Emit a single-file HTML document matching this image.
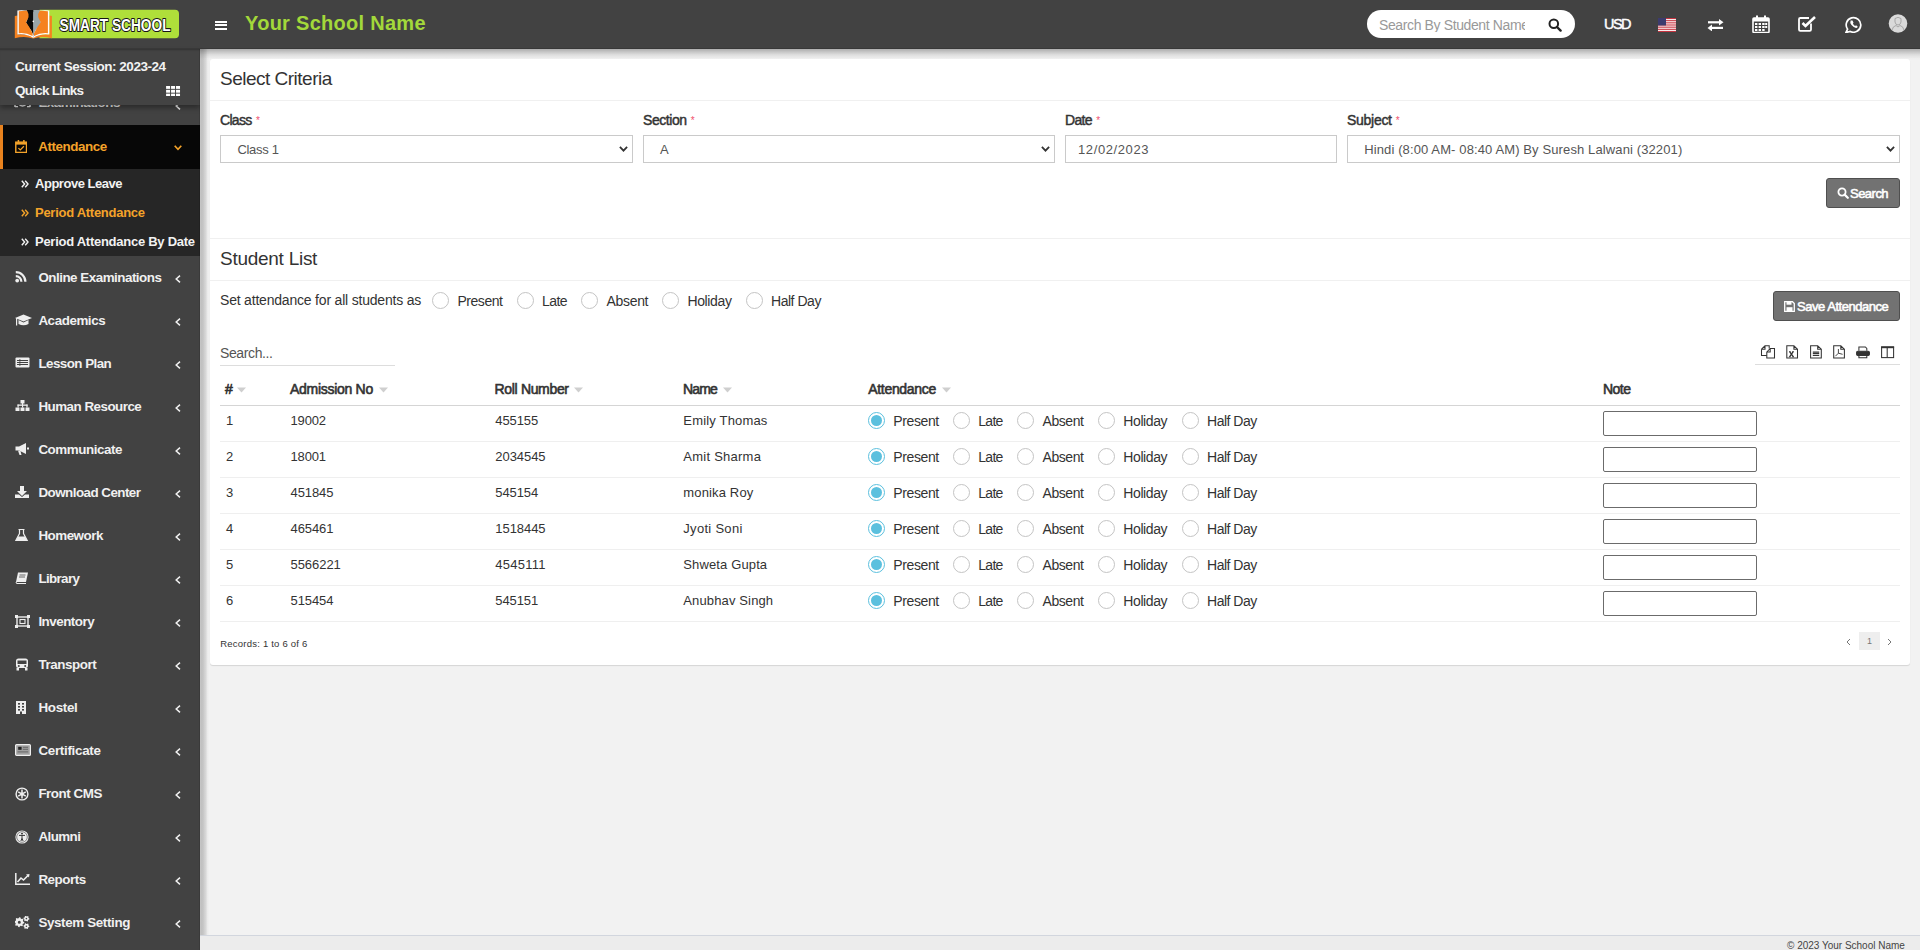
<!DOCTYPE html>
<html><head><meta charset="utf-8"><style>*{box-sizing:border-box;margin:0;padding:0}
html,body{width:1920px;height:950px;overflow:hidden;background:#f1f1f1;font-family:"Liberation Sans",sans-serif;color:#333;font-size:14px}
.abs{position:absolute}
.tx{white-space:nowrap}
#hdr{position:absolute;left:0;top:0;width:1920px;height:49px;background:#424242}
#side{position:absolute;left:0;top:48px;width:200px;height:902px;background:#424242}
.btn{background:#727272;border:1px solid #4f4f4f;border-radius:3px}
.logo-t{left:59px;top:15px;font-size:17px;line-height:17px;font-weight:bold;color:#fff;letter-spacing:-0.3px;transform:scaleX(0.82);transform-origin:0 0;-webkit-text-stroke:0.6px #222;text-shadow:1px 1px 0 #222,-0.5px -0.5px 0 #222}
</style></head><body>
<div id="hdr"></div>
<svg class="abs" style="left:0;top:0" width="190" height="48" viewBox="0 0 190 48">
<path d="M39.5 9.8 H175 Q179 9.8 179 13.8 V34.2 Q179 38.2 175 38.2 H39.5 Z" fill="#afdf3a"/>
<path d="M14.8 16 L17.6 15.6 L17.6 34.6 Q26 33 33.3 37.6 Q41 33 49.3 34.6 L49.3 15.6 L51.9 16 L51.9 38.3 Q42 35.6 33.3 38.6 Q24.5 35.6 14.8 38.3 Z" fill="#f58220"/>
<path d="M17.4 10.4 Q26 9.6 33.3 12 L33.3 38 Q26 33.4 17.4 34.6 Z" fill="#fff"/>
<path d="M49.3 10.4 Q40.6 9.6 33.3 12 L33.3 38 Q40.6 33.4 49.3 34.6 Z" fill="#fff"/>
<path d="M27 10 H33.4 V35 L31 30 Q28 27 26 22.5 Q27.8 20 27.6 16 Z" fill="#0a0a0a"/>
<path d="M33.4 10 H39.7 L40 16 Q39.6 20 41 22.5 Q38.5 27 35.6 30 L33.4 35 Z" fill="#9aa6aa"/>
<path d="M18.8 11.2 Q23 10.6 27 10.8 Q29.2 14 28.5 17.2 Q27.6 19 26 22.2 Q29.5 26.5 32.6 33.5 L32.6 36 Q26 32.4 18.8 33.2 Z" fill="#f58220"/>
<path d="M47.9 11.2 Q43.7 10.6 39.7 10.8 Q37.5 14 38.2 17.2 Q39.1 19 40.7 22.2 Q37.2 26.5 34 33.5 L34 36 Q40.7 32.4 47.9 33.2 Z" fill="#f58220"/>
<circle cx="33.3" cy="21.4" r="0.8" fill="#fff"/>
<text x="59.5" y="30.8" font-family="Liberation Sans" font-weight="bold" font-size="17.3" textLength="111" lengthAdjust="spacingAndGlyphs" fill="#fff" stroke="#151515" stroke-width="2.1" paint-order="stroke" stroke-linejoin="round">SMART SCHOOL</text>
</svg>
<div class="abs" style="left:214.5px;top:20.5px;width:12.3px;height:2.3px;background:#fff"></div>
<div class="abs" style="left:214.5px;top:24.2px;width:12.3px;height:2.3px;background:#fff"></div>
<div class="abs" style="left:214.5px;top:27.9px;width:12.3px;height:2.3px;background:#fff"></div>
<div class="abs" style="left:1367px;top:10px;width:208px;height:28px;border-radius:14px;background:#fff"></div>
<svg class="abs" style="left:1548px;top:17.5px" width="14" height="14" viewBox="0 0 14 14"><circle cx="5.8" cy="5.8" r="4.3" stroke="#222" stroke-width="2" fill="none"/><path d="M9 9 L12.6 12.6" stroke="#222" stroke-width="2.4" stroke-linecap="round"/></svg>
<svg class="abs" style="left:1658px;top:18px" width="18" height="14" viewBox="0 0 18 14">
<rect width="18" height="14" fill="#fff"/>
<g fill="#c5333f"><rect y="0" width="18" height="1.1"/><rect y="2.15" width="18" height="1.1"/><rect y="4.3" width="18" height="1.1"/><rect y="6.45" width="18" height="1.1"/><rect y="8.6" width="18" height="1.1"/><rect y="10.75" width="18" height="1.1"/><rect y="12.9" width="18" height="1.1"/></g>
<rect width="8" height="7.5" fill="#3c3b6e"/></svg>
<svg class="abs" style="left:1707px;top:19px" width="17" height="12" viewBox="0 0 17 12" fill="#fff">
<rect x="1" y="2.2" width="12" height="2.2"/><path d="M12 0 L16.5 3.3 L12 6.6Z"/>
<rect x="4" y="7.8" width="12" height="2.2"/><path d="M5 5.4 L0.5 8.9 L5 12.4Z"/></svg>
<svg class="abs" style="left:1752px;top:15px" width="18" height="18" viewBox="0 0 18 18">
<rect x="1" y="3" width="16" height="14.5" rx="1" fill="none" stroke="#fff" stroke-width="1.6"/>
<rect x="1" y="3" width="16" height="3.5" fill="#fff"/>
<rect x="4" y="0.5" width="2" height="4" fill="#fff"/><rect x="12" y="0.5" width="2" height="4" fill="#fff"/>
<g fill="#fff"><rect x="3" y="8" width="2.4" height="2"/><rect x="6.6" y="8" width="2.4" height="2"/><rect x="10.2" y="8" width="2.4" height="2"/><rect x="13.2" y="8" width="2" height="2"/>
<rect x="3" y="11" width="2.4" height="2"/><rect x="6.6" y="11" width="2.4" height="2"/><rect x="10.2" y="11" width="2.4" height="2"/><rect x="13.2" y="11" width="2" height="2"/>
<rect x="3" y="14" width="2.4" height="2"/><rect x="6.6" y="14" width="2.4" height="2"/><rect x="10.2" y="14" width="2.4" height="2"/></g></svg>
<svg class="abs" style="left:1798px;top:16px" width="19" height="16" viewBox="0 0 19 16">
<path d="M13 7.5 V13.5 Q13 14.8 11.7 14.8 H2.3 Q1 14.8 1 13.5 V3.3 Q1 2 2.3 2 H11" fill="none" stroke="#fff" stroke-width="1.8"/>
<path d="M4.5 7 L7.5 10 L17 1" fill="none" stroke="#fff" stroke-width="2.6"/></svg>
<svg class="abs" style="left:1845px;top:16px" width="18" height="17" viewBox="0 0 18 17">
<path d="M2.6 13.2 A7.3 7.3 0 1 1 5.2 15.4 L1 16.5 Z" fill="none" stroke="#fff" stroke-width="1.7"/>
<path d="M5.6 4.6 Q4.6 6.6 6.5 9.1 Q8.7 11.7 11 12 Q12.5 12 12.7 10.5 L11 9.2 L10.1 9.9 Q8.6 9.2 7.9 7.6 L8.5 6.7 L7.5 4.6 Z" fill="#fff"/></svg>
<svg class="abs" style="left:1888px;top:14px" width="20" height="19" viewBox="0 0 20 19">
<circle cx="10" cy="9.5" r="9.3" fill="#dadada"/>
<path d="M7 4.5 Q10 2.2 13 4.5 L13 8 Q12.5 11 10 11 Q7.5 11 7 8 Z" fill="none" stroke="#9a9a9a" stroke-width="0.8"/>
<path d="M4 16 Q5 12 8 11.5 L10 13 L12 11.5 Q15 12 16 16" fill="none" stroke="#9a9a9a" stroke-width="0.8"/></svg>
<div id="side"></div>
<div class="abs tx" style="left:38.40px;top:96.26px;font-size:13.4px;line-height:13.4px;font-weight:bold;color:#eee;letter-spacing:-0.460px">Examinations</div>
<svg class="abs" style="left:175px;top:101.5px" width="6" height="8" viewBox="0 0 6 8"><path d="M5 0.6 L1.2 4 L5 7.4" stroke="#f0f0f0" stroke-width="1.5" fill="none"/></svg>
<svg class="abs" style="left:14px;top:98px" width="17" height="10" viewBox="0 0 17 10"><path d="M1 9 L1 3 M16 9 L16 3 M4 5 Q8.5 11 13 5" stroke="#eee" stroke-width="1.5" fill="none"/><path d="M1 8.6 H4 M13 8.6 H16" stroke="#eee" stroke-width="1.2"/></svg>
<div class="abs" style="left:0;top:49px;width:200px;height:56px;background:#434343;box-shadow:0 3px 5px rgba(0,0,0,0.35), inset 0 2px 2px -1px rgba(0,0,0,0.25)"></div>
<svg class="abs" style="left:166px;top:85.5px" width="14.5" height="10.5" viewBox="0 0 15 11" fill="#fff">
<rect x="0" y="0" width="4.2" height="3"/><rect x="5.2" y="0" width="4.2" height="3"/><rect x="10.4" y="0" width="4.2" height="3"/>
<rect x="0" y="4" width="4.2" height="3"/><rect x="5.2" y="4" width="4.2" height="3"/><rect x="10.4" y="4" width="4.2" height="3"/>
<rect x="0" y="8" width="4.2" height="3"/><rect x="5.2" y="8" width="4.2" height="3"/><rect x="10.4" y="8" width="4.2" height="3"/></svg>
<div class="abs" style="left:0;top:125px;width:200px;height:44px;background:#070707"></div>
<div class="abs" style="left:0;top:125px;width:3px;height:44px;background:#e8821e"></div>
<div class="abs" style="left:0;top:169px;width:200px;height:87px;background:#262626"></div>
<svg class="abs" style="left:15px;top:139.8px" width="12.3" height="13.2" viewBox="0 0 13 14">
<rect x="0.8" y="2.3" width="11.4" height="10.9" fill="none" stroke="#f4a32a" stroke-width="1.5"/><rect x="0.8" y="2.3" width="11.4" height="2.6" fill="#f4a32a"/>
<rect x="2.8" y="0" width="1.6" height="3" fill="#f4a32a"/><rect x="8.6" y="0" width="1.6" height="3" fill="#f4a32a"/>
<path d="M3.6 8.6 L5.6 10.5 L9.4 6.6" stroke="#f4a32a" stroke-width="1.3" fill="none"/></svg>
<svg class="abs" style="left:174px;top:145px" width="8" height="6" viewBox="0 0 8 6"><path d="M0.7 0.7 L4 4.4 L7.3 0.7" stroke="#f4a32a" stroke-width="1.6" fill="none"/></svg>
<svg class="abs" style="left:21px;top:180.20000000000002px" width="8" height="8" viewBox="0 0 8 8"><path d="M0.8 0.8 L3.6 4 L0.8 7.2 M4.2 0.8 L7 4 L4.2 7.2" stroke="#f2f2f2" stroke-width="1.4" fill="none"/></svg>
<svg class="abs" style="left:21px;top:208.8px" width="8" height="8" viewBox="0 0 8 8"><path d="M0.8 0.8 L3.6 4 L0.8 7.2 M4.2 0.8 L7 4 L4.2 7.2" stroke="#f4a32a" stroke-width="1.4" fill="none"/></svg>
<svg class="abs" style="left:21px;top:237.9px" width="8" height="8" viewBox="0 0 8 8"><path d="M0.8 0.8 L3.6 4 L0.8 7.2 M4.2 0.8 L7 4 L4.2 7.2" stroke="#f2f2f2" stroke-width="1.4" fill="none"/></svg>
<svg class="abs" style="left:15px;top:271px" width="18" height="14" viewBox="0 0 18 14"><circle cx="2.2" cy="9.6" r="1.9" fill="#eee"/><path d="M0.8 5.2 A5.6 5.6 0 0 1 6.4 10.8 M0.8 1.2 A9.6 9.6 0 0 1 10.4 10.8" stroke="#eee" stroke-width="2.2" fill="none"/></svg>
<svg class="abs" style="left:175px;top:275px" width="6" height="8" viewBox="0 0 6 8"><path d="M5 0.6 L1.2 4 L5 7.4" stroke="#f0f0f0" stroke-width="1.5" fill="none"/></svg>
<svg class="abs" style="left:15px;top:314px" width="18" height="14" viewBox="0 0 18 14"><path d="M0 4 L8.5 0.5 L17 4 L8.5 7.5 Z" fill="#eee"/><path d="M3.5 6 L3.5 10 Q8.5 12.5 13.5 10 L13.5 6 L8.5 8.5 Z" fill="#eee"/><rect x="1" y="4" width="1.2" height="7.5" fill="#eee"/></svg>
<svg class="abs" style="left:175px;top:318px" width="6" height="8" viewBox="0 0 6 8"><path d="M5 0.6 L1.2 4 L5 7.4" stroke="#f0f0f0" stroke-width="1.5" fill="none"/></svg>
<svg class="abs" style="left:15px;top:357px" width="18" height="14" viewBox="0 0 18 14"><rect x="0.5" y="0.5" width="14" height="10" rx="1" fill="#eee"/><g fill="#424242"><rect x="2" y="3" width="11" height="1"/><rect x="2" y="5" width="11" height="1"/><rect x="2" y="7" width="11" height="1"/><rect x="4.5" y="2" width="0.8" height="7"/></g></svg>
<svg class="abs" style="left:175px;top:361px" width="6" height="8" viewBox="0 0 6 8"><path d="M5 0.6 L1.2 4 L5 7.4" stroke="#f0f0f0" stroke-width="1.5" fill="none"/></svg>
<svg class="abs" style="left:15px;top:400px" width="18" height="14" viewBox="0 0 18 14"><rect x="5.5" y="0" width="4" height="3.5" fill="#eee"/><rect x="2.5" y="4.5" width="10" height="1.3" fill="#eee"/><rect x="7" y="3" width="1.1" height="2" fill="#eee"/><rect x="2.5" y="4.5" width="1.2" height="3" fill="#eee"/><rect x="11.4" y="4.5" width="1.2" height="3" fill="#eee"/><rect x="0.5" y="7.5" width="4" height="3.5" fill="#eee"/><rect x="5.5" y="7.5" width="4" height="3.5" fill="#eee"/><rect x="10.5" y="7.5" width="4" height="3.5" fill="#eee"/><rect x="7" y="5" width="1.1" height="2.5" fill="#eee"/></svg>
<svg class="abs" style="left:175px;top:404px" width="6" height="8" viewBox="0 0 6 8"><path d="M5 0.6 L1.2 4 L5 7.4" stroke="#f0f0f0" stroke-width="1.5" fill="none"/></svg>
<svg class="abs" style="left:15px;top:443px" width="18" height="14" viewBox="0 0 18 14"><path d="M0.5 3.5 L4 3.5 L11 0 L11 11 L4 7.5 L0.5 7.5 Z" fill="#eee"/><path d="M3 7.5 L4.5 12 L6.5 12 L5.5 8" fill="#eee"/><rect x="12" y="4.5" width="2" height="2" fill="#eee"/></svg>
<svg class="abs" style="left:175px;top:447px" width="6" height="8" viewBox="0 0 6 8"><path d="M5 0.6 L1.2 4 L5 7.4" stroke="#f0f0f0" stroke-width="1.5" fill="none"/></svg>
<svg class="abs" style="left:15px;top:486px" width="18" height="14" viewBox="0 0 18 14"><path d="M5 0 L9 0 L9 5 L12 5 L7 10 L2 5 L5 5 Z" fill="#eee"/><path d="M0 8.5 L4 8.5 L7 11 L10 8.5 L14 8.5 L14 12 L0 12 Z" fill="#eee"/></svg>
<svg class="abs" style="left:175px;top:490px" width="6" height="8" viewBox="0 0 6 8"><path d="M5 0.6 L1.2 4 L5 7.4" stroke="#f0f0f0" stroke-width="1.5" fill="none"/></svg>
<svg class="abs" style="left:15px;top:529px" width="18" height="14" viewBox="0 0 18 14"><path d="M3.5 0.5 L9.5 0.5 M4.5 0.5 L4.5 4.5 L0.8 11.5 L12.2 11.5 L8.5 4.5 L8.5 0.5" stroke="#eee" stroke-width="1.2" fill="none"/><path d="M3 7.5 L10 7.5 L12 11.5 L1 11.5 Z" fill="#eee"/></svg>
<svg class="abs" style="left:175px;top:533px" width="6" height="8" viewBox="0 0 6 8"><path d="M5 0.6 L1.2 4 L5 7.4" stroke="#f0f0f0" stroke-width="1.5" fill="none"/></svg>
<svg class="abs" style="left:15px;top:572px" width="18" height="14" viewBox="0 0 18 14"><path d="M3 0.5 L13 0.5 L11 10 L1 10 Z" fill="#eee"/><path d="M1 10 L1.6 11.5 L11 11.5" stroke="#eee" stroke-width="1" fill="none"/><path d="M4.5 3 L10.5 3 M4 5 L10 5" stroke="#424242" stroke-width="0.8"/></svg>
<svg class="abs" style="left:175px;top:576px" width="6" height="8" viewBox="0 0 6 8"><path d="M5 0.6 L1.2 4 L5 7.4" stroke="#f0f0f0" stroke-width="1.5" fill="none"/></svg>
<svg class="abs" style="left:15px;top:615px" width="18" height="14" viewBox="0 0 18 14"><rect x="2" y="2" width="11" height="9" fill="none" stroke="#eee" stroke-width="1.4"/><rect x="0" y="0" width="3" height="3" fill="#eee"/><rect x="12" y="0" width="3" height="3" fill="#eee"/><rect x="0" y="10" width="3" height="3" fill="#eee"/><rect x="12" y="10" width="3" height="3" fill="#eee"/><rect x="5" y="4.5" width="5" height="4" fill="none" stroke="#eee" stroke-width="1.1"/></svg>
<svg class="abs" style="left:175px;top:619px" width="6" height="8" viewBox="0 0 6 8"><path d="M5 0.6 L1.2 4 L5 7.4" stroke="#f0f0f0" stroke-width="1.5" fill="none"/></svg>
<svg class="abs" style="left:15px;top:658px" width="18" height="14" viewBox="0 0 18 14"><rect x="1" y="0.5" width="12" height="9.5" rx="2.5" fill="#eee"/><rect x="2.5" y="2.5" width="9" height="3.5" fill="#424242"/><circle cx="3.8" cy="8" r="1" fill="#424242"/><circle cx="10.2" cy="8" r="1" fill="#424242"/><rect x="1.5" y="10" width="2.5" height="2.5" fill="#eee"/><rect x="10" y="10" width="2.5" height="2.5" fill="#eee"/></svg>
<svg class="abs" style="left:175px;top:662px" width="6" height="8" viewBox="0 0 6 8"><path d="M5 0.6 L1.2 4 L5 7.4" stroke="#f0f0f0" stroke-width="1.5" fill="none"/></svg>
<svg class="abs" style="left:15px;top:701px" width="18" height="14" viewBox="0 0 18 14"><rect x="1" y="0" width="10" height="13" fill="#eee"/><g fill="#424242"><rect x="3" y="2" width="2" height="1.6"/><rect x="7" y="2" width="2" height="1.6"/><rect x="3" y="5" width="2" height="1.6"/><rect x="7" y="5" width="2" height="1.6"/><rect x="3" y="8" width="2" height="1.6"/><rect x="7" y="8" width="2" height="1.6"/><rect x="5" y="10.5" width="2" height="2.5"/></g></svg>
<svg class="abs" style="left:175px;top:705px" width="6" height="8" viewBox="0 0 6 8"><path d="M5 0.6 L1.2 4 L5 7.4" stroke="#f0f0f0" stroke-width="1.5" fill="none"/></svg>
<svg class="abs" style="left:15px;top:744px" width="18" height="14" viewBox="0 0 18 14"><rect x="0.6" y="0.6" width="14.8" height="10.8" rx="1" fill="#a0a0a0" stroke="#eee" stroke-width="1.2"/><rect x="3.2" y="2.8" width="3.4" height="3" fill="#222"/><g fill="#666"><rect x="7.8" y="2.8" width="5.2" height="1"/><rect x="7.8" y="4.8" width="5.2" height="1"/><rect x="2.6" y="7.4" width="10.6" height="1"/></g></svg>
<svg class="abs" style="left:175px;top:748px" width="6" height="8" viewBox="0 0 6 8"><path d="M5 0.6 L1.2 4 L5 7.4" stroke="#f0f0f0" stroke-width="1.5" fill="none"/></svg>
<svg class="abs" style="left:15px;top:787px" width="18" height="14" viewBox="0 0 18 14"><circle cx="7" cy="7" r="6.6" fill="#eee"/><circle cx="7" cy="7" r="5.2" fill="#424242"/><path d="M7 2.6 L7 11.4 M3.2 4.8 L10.8 9.2 M3.2 9.2 L10.8 4.8" stroke="#eee" stroke-width="1.5"/><circle cx="7" cy="7" r="1.6" fill="#eee"/></svg>
<svg class="abs" style="left:175px;top:791px" width="6" height="8" viewBox="0 0 6 8"><path d="M5 0.6 L1.2 4 L5 7.4" stroke="#f0f0f0" stroke-width="1.5" fill="none"/></svg>
<svg class="abs" style="left:15px;top:830px" width="18" height="14" viewBox="0 0 18 14"><circle cx="7" cy="7" r="6.6" fill="#eee"/><circle cx="7" cy="7" r="5.3" fill="none" stroke="#424242" stroke-width="0.6"/><circle cx="7" cy="3.6" r="0.9" fill="#222"/><path d="M4 5.4 L10 5.4 M7 5.4 L7 8.4 M7 8.3 L5.9 11 M7 8.3 L8.1 11" stroke="#222" stroke-width="0.9" fill="none"/></svg>
<svg class="abs" style="left:175px;top:834px" width="6" height="8" viewBox="0 0 6 8"><path d="M5 0.6 L1.2 4 L5 7.4" stroke="#f0f0f0" stroke-width="1.5" fill="none"/></svg>
<svg class="abs" style="left:15px;top:873px" width="18" height="14" viewBox="0 0 18 14"><path d="M0.8 0 L0.8 11.2 L15 11.2" stroke="#eee" stroke-width="1.5" fill="none"/><path d="M2.5 9 L6 5 L8.5 7 L13.5 2" stroke="#eee" stroke-width="1.6" fill="none"/><path d="M11 1.5 L14.5 1 L14 4.5Z" fill="#eee"/></svg>
<svg class="abs" style="left:175px;top:877px" width="6" height="8" viewBox="0 0 6 8"><path d="M5 0.6 L1.2 4 L5 7.4" stroke="#f0f0f0" stroke-width="1.5" fill="none"/></svg>
<svg class="abs" style="left:15px;top:916px" width="18" height="14" viewBox="0 0 18 14"><path fill-rule="evenodd" d="M8.13 5.44 L9.30 6.20 L9.20 7.18 L7.90 7.69 L7.54 8.37 L7.84 9.74 L7.08 10.36 L5.79 9.80 L5.06 10.03 L4.30 11.20 L3.32 11.10 L2.81 9.80 L2.13 9.44 L0.76 9.74 L0.14 8.98 L0.70 7.69 L0.47 6.96 L-0.70 6.20 L-0.60 5.22 L0.70 4.71 L1.06 4.03 L0.76 2.66 L1.52 2.04 L2.81 2.60 L3.54 2.37 L4.30 1.20 L5.28 1.30 L5.79 2.60 L6.47 2.96 L7.84 2.66 L8.46 3.42 L7.90 4.71 Z M5.80 6.20 A1.5 1.5 0 1 0 2.80 6.20 A1.5 1.5 0 1 0 5.80 6.20 Z M13.62 2.00 L14.40 2.60 L14.30 3.38 L13.39 3.75 L13.03 4.23 L12.90 5.20 L12.18 5.50 L11.40 4.90 L10.80 4.82 L9.90 5.20 L9.28 4.72 L9.41 3.75 L9.18 3.20 L8.40 2.60 L8.50 1.82 L9.41 1.45 L9.77 0.97 L9.90 0.00 L10.62 -0.30 L11.40 0.30 L12.00 0.38 L12.90 0.00 L13.52 0.48 L13.39 1.45 Z M12.20 2.60 A0.8 0.8 0 1 0 10.60 2.60 A0.8 0.8 0 1 0 12.20 2.60 Z M13.62 9.60 L14.40 10.20 L14.30 10.98 L13.39 11.35 L13.03 11.83 L12.90 12.80 L12.18 13.10 L11.40 12.50 L10.80 12.42 L9.90 12.80 L9.28 12.32 L9.41 11.35 L9.18 10.80 L8.40 10.20 L8.50 9.42 L9.41 9.05 L9.77 8.57 L9.90 7.60 L10.62 7.30 L11.40 7.90 L12.00 7.98 L12.90 7.60 L13.52 8.08 L13.39 9.05 Z M12.20 10.20 A0.8 0.8 0 1 0 10.60 10.20 A0.8 0.8 0 1 0 12.20 10.20 Z" fill="#eee"/></svg>
<svg class="abs" style="left:175px;top:920px" width="6" height="8" viewBox="0 0 6 8"><path d="M5 0.6 L1.2 4 L5 7.4" stroke="#f0f0f0" stroke-width="1.5" fill="none"/></svg>
<div class="abs" style="left:200px;top:49px;width:1720px;height:887px;background:#f2f2f2"></div>
<div class="abs" style="left:200px;top:49px;width:10px;height:887px;background:linear-gradient(to right, rgba(0,0,0,0.190) 0.5px, rgba(0,0,0,0.202) 1.5px, rgba(0,0,0,0.194) 2.5px, rgba(0,0,0,0.174) 3.5px, rgba(0,0,0,0.140) 4.5px, rgba(0,0,0,0.112) 5.5px, rgba(0,0,0,0.074) 6.5px, rgba(0,0,0,0.029) 7.5px, rgba(0,0,0,0.012) 8.5px, rgba(0,0,0,0.000) 9.5px)"></div>
<div class="abs" style="left:200px;top:49px;width:1720px;height:12px;background:linear-gradient(to bottom, rgba(0,0,0,0.260) 0.5px, rgba(0,0,0,0.231) 1.5px, rgba(0,0,0,0.198) 2.5px, rgba(0,0,0,0.161) 3.5px, rgba(0,0,0,0.128) 4.5px, rgba(0,0,0,0.095) 5.5px, rgba(0,0,0,0.070) 6.5px, rgba(0,0,0,0.050) 7.5px, rgba(0,0,0,0.037) 8.5px, rgba(0,0,0,0.017) 9.5px, rgba(0,0,0,0.008) 10.5px, rgba(0,0,0,0.000) 11.5px)"></div>
<div class="abs" style="left:0;top:48px;width:1920px;height:1px;background:#383838"></div>
<div class="abs" style="left:199px;top:49px;width:1px;height:901px;background:rgba(0,0,0,0.12)"></div>
<div class="abs" style="left:200px;top:935px;width:1720px;height:15px;background:#ececec;border-top:1px solid #d2d6de"></div>
<div class="abs" style="left:210px;top:59px;width:1700px;height:606px;background:#fff;border-radius:3px;box-shadow:0 1px 1px rgba(0,0,0,0.12)"></div>
<div class="abs" style="left:210px;top:100px;width:1700px;height:1px;background:#f0f0f0"></div>
<div class="abs" style="left:210px;top:238px;width:1700px;height:1px;background:#f0f0f0"></div>
<div class="abs" style="left:210px;top:280px;width:1700px;height:1px;background:#f0f0f0"></div>
<div class="abs" style="left:256.1px;top:115.5px;font-size:10px;color:#f0506e;line-height:10px">*</div>
<div class="abs" style="left:220px;top:135px;width:412.6px;height:28px;border:1px solid #cacaca;background:#fff"></div>
<div class="abs" style="left:690.8px;top:115.5px;font-size:10px;color:#f0506e;line-height:10px">*</div>
<div class="abs" style="left:643px;top:135px;width:411.5px;height:28px;border:1px solid #cacaca;background:#fff"></div>
<div class="abs" style="left:1096.3px;top:115.5px;font-size:10px;color:#f0506e;line-height:10px">*</div>
<div class="abs" style="left:1065px;top:135px;width:271.5px;height:28px;border:1px solid #cacaca;background:#fff"></div>
<div class="abs" style="left:1395.8px;top:115.5px;font-size:10px;color:#f0506e;line-height:10px">*</div>
<div class="abs" style="left:1347px;top:135px;width:552.5px;height:28px;border:1px solid #cacaca;background:#fff"></div>
<svg class="abs" style="left:618.5px;top:146px" width="9" height="6" viewBox="0 0 9 6"><path d="M0.9 0.9 L4.5 4.6 L8.1 0.9" stroke="#333" stroke-width="1.8" fill="none"/></svg>
<svg class="abs" style="left:1040.5px;top:146px" width="9" height="6" viewBox="0 0 9 6"><path d="M0.9 0.9 L4.5 4.6 L8.1 0.9" stroke="#333" stroke-width="1.8" fill="none"/></svg>
<svg class="abs" style="left:1885.5px;top:146px" width="9" height="6" viewBox="0 0 9 6"><path d="M0.9 0.9 L4.5 4.6 L8.1 0.9" stroke="#333" stroke-width="1.8" fill="none"/></svg>
<div class="abs btn" style="left:1826px;top:178px;width:74px;height:30px"></div>
<svg class="abs" style="left:1837px;top:187px" width="12" height="12" viewBox="0 0 12 12"><circle cx="5" cy="5" r="3.6" stroke="#fff" stroke-width="1.8" fill="none"/><path d="M7.6 7.6 L10.8 10.8" stroke="#fff" stroke-width="2.2" stroke-linecap="round"/></svg>
<div class="abs" style="left:432px;top:291.5px;width:17px;height:17px;border-radius:50%;border:1px solid #c4c4c4;background:#fff"></div>
<div class="abs" style="left:517px;top:291.5px;width:17px;height:17px;border-radius:50%;border:1px solid #c4c4c4;background:#fff"></div>
<div class="abs" style="left:581px;top:291.5px;width:17px;height:17px;border-radius:50%;border:1px solid #c4c4c4;background:#fff"></div>
<div class="abs" style="left:662px;top:291.5px;width:17px;height:17px;border-radius:50%;border:1px solid #c4c4c4;background:#fff"></div>
<div class="abs" style="left:745.7px;top:291.5px;width:17px;height:17px;border-radius:50%;border:1px solid #c4c4c4;background:#fff"></div>
<div class="abs btn" style="left:1773px;top:291px;width:127px;height:30px"></div>
<svg class="abs" style="left:1784px;top:301px" width="11" height="11" viewBox="0 0 11 11"><path d="M0.7 0.7 H8.5 L10.3 2.5 V10.3 H0.7 Z" fill="none" stroke="#fff" stroke-width="1.3"/><rect x="2.5" y="0.7" width="5" height="3" fill="#fff"/><rect x="2.5" y="6.2" width="6" height="4" fill="#fff"/></svg>
<div class="abs" style="left:220px;top:365px;width:175px;height:1px;background:#ddd"></div>
<div class="abs" style="left:1755px;top:364px;width:145px;height:1px;background:#ddd"></div>
<svg class="abs" style="left:1755px;top:340px" width="145" height="22" viewBox="0 0 145 22" fill="none" stroke="#333" stroke-width="1.05">
<path d="M6.5 9.2 L10 5.8 L14.2 5.8 L14.2 8.4 M6.5 9.2 L6.5 15.4 L11.8 15.4 M6.5 9.2 L10 9.2 L10 5.8"/>
<path d="M11.8 12 L15.2 8.4 L19.5 8.4 L19.5 18 L11.8 18 Z M11.8 12 L15.2 12 L15.2 8.4"/>
<path d="M31.8 5.8 L38.9 5.8 L42.5 9.2 L42.5 18 L31.8 18 Z M38.9 5.8 L38.9 9.2 L42.5 9.2"/>
<path d="M34.6 11.6 L38.4 16.8 M38.2 11.6 L34.6 16.8" stroke-width="1.3"/><path d="M34 11.6 H35.6 M37.3 11.6 H38.9 M33.9 16.8 H35.5 M37.4 16.8 H39" stroke-width="0.8"/>
<path d="M55.6 5.8 L62.7 5.8 L66.3 9.2 L66.3 18 L55.6 18 Z M62.7 5.8 L62.7 9.2 L66.3 9.2"/>
<path d="M57.8 12.1 H64.2 M57.8 13.6 H64.2 M57.8 15.4 H64.2"/>
<path d="M78.7 5.8 L85.8 5.8 L89.4 9.2 L89.4 18 L78.7 18 Z M85.8 5.8 L85.8 9.2 L89.4 9.2"/>
<path d="M83.4 9 L83.4 13.2 L80.4 16.2 M83.4 13.2 L87.6 14.3" stroke-width="0.9"/>
<path d="M103.9 10.8 L103.9 6.9 L110.3 6.9 L111.8 8.4 L111.8 10.8 M103.9 15.5 L103.9 17.7 L111.8 17.7 L111.8 15.5"/>
<rect x="101.6" y="11.2" width="12.8" height="4.3" rx="1.2" fill="#333"/>
<rect x="126.6" y="7" width="12" height="10.6"/><path d="M126.1 7.3 H139.1" stroke-width="1.8"/><path d="M132.2 7 V17.6"/>
</svg>
<svg class="abs" style="left:237px;top:387px" width="9" height="6" viewBox="0 0 9 6"><path d="M0 0.5 L9 0.5 L4.5 5.5Z" fill="#cfcfcf"/></svg>
<svg class="abs" style="left:379px;top:387px" width="9" height="6" viewBox="0 0 9 6"><path d="M0 0.5 L9 0.5 L4.5 5.5Z" fill="#cfcfcf"/></svg>
<svg class="abs" style="left:574px;top:387px" width="9" height="6" viewBox="0 0 9 6"><path d="M0 0.5 L9 0.5 L4.5 5.5Z" fill="#cfcfcf"/></svg>
<svg class="abs" style="left:723px;top:387px" width="9" height="6" viewBox="0 0 9 6"><path d="M0 0.5 L9 0.5 L4.5 5.5Z" fill="#cfcfcf"/></svg>
<svg class="abs" style="left:941.5px;top:387px" width="9" height="6" viewBox="0 0 9 6"><path d="M0 0.5 L9 0.5 L4.5 5.5Z" fill="#cfcfcf"/></svg>
<div class="abs" style="left:220px;top:404.5px;width:1680px;height:1.5px;background:#d5d5d5"></div>
<div class="abs" style="left:868px;top:412.0px;width:17px;height:17px;border-radius:50%;border:1.2px solid #5bc0de;background:#fff"><div style="position:absolute;left:1.8px;top:1.8px;width:11px;height:11px;border-radius:50%;background:#5bc0de"></div></div>
<div class="abs" style="left:953px;top:412.0px;width:17px;height:17px;border-radius:50%;border:1px solid #c4c4c4;background:#fff"></div>
<div class="abs" style="left:1017px;top:412.0px;width:17px;height:17px;border-radius:50%;border:1px solid #c4c4c4;background:#fff"></div>
<div class="abs" style="left:1098px;top:412.0px;width:17px;height:17px;border-radius:50%;border:1px solid #c4c4c4;background:#fff"></div>
<div class="abs" style="left:1182px;top:412.0px;width:17px;height:17px;border-radius:50%;border:1px solid #c4c4c4;background:#fff"></div>
<div class="abs" style="left:1603px;top:411px;width:154px;height:25px;border:1px solid #6b6b6b;border-radius:2px;background:#fff"></div>
<div class="abs" style="left:220px;top:441px;width:1680px;height:1px;background:#efefef"></div>
<div class="abs" style="left:868px;top:448.0px;width:17px;height:17px;border-radius:50%;border:1.2px solid #5bc0de;background:#fff"><div style="position:absolute;left:1.8px;top:1.8px;width:11px;height:11px;border-radius:50%;background:#5bc0de"></div></div>
<div class="abs" style="left:953px;top:448.0px;width:17px;height:17px;border-radius:50%;border:1px solid #c4c4c4;background:#fff"></div>
<div class="abs" style="left:1017px;top:448.0px;width:17px;height:17px;border-radius:50%;border:1px solid #c4c4c4;background:#fff"></div>
<div class="abs" style="left:1098px;top:448.0px;width:17px;height:17px;border-radius:50%;border:1px solid #c4c4c4;background:#fff"></div>
<div class="abs" style="left:1182px;top:448.0px;width:17px;height:17px;border-radius:50%;border:1px solid #c4c4c4;background:#fff"></div>
<div class="abs" style="left:1603px;top:447px;width:154px;height:25px;border:1px solid #6b6b6b;border-radius:2px;background:#fff"></div>
<div class="abs" style="left:220px;top:477px;width:1680px;height:1px;background:#efefef"></div>
<div class="abs" style="left:868px;top:484.0px;width:17px;height:17px;border-radius:50%;border:1.2px solid #5bc0de;background:#fff"><div style="position:absolute;left:1.8px;top:1.8px;width:11px;height:11px;border-radius:50%;background:#5bc0de"></div></div>
<div class="abs" style="left:953px;top:484.0px;width:17px;height:17px;border-radius:50%;border:1px solid #c4c4c4;background:#fff"></div>
<div class="abs" style="left:1017px;top:484.0px;width:17px;height:17px;border-radius:50%;border:1px solid #c4c4c4;background:#fff"></div>
<div class="abs" style="left:1098px;top:484.0px;width:17px;height:17px;border-radius:50%;border:1px solid #c4c4c4;background:#fff"></div>
<div class="abs" style="left:1182px;top:484.0px;width:17px;height:17px;border-radius:50%;border:1px solid #c4c4c4;background:#fff"></div>
<div class="abs" style="left:1603px;top:483px;width:154px;height:25px;border:1px solid #6b6b6b;border-radius:2px;background:#fff"></div>
<div class="abs" style="left:220px;top:513px;width:1680px;height:1px;background:#efefef"></div>
<div class="abs" style="left:868px;top:520.0px;width:17px;height:17px;border-radius:50%;border:1.2px solid #5bc0de;background:#fff"><div style="position:absolute;left:1.8px;top:1.8px;width:11px;height:11px;border-radius:50%;background:#5bc0de"></div></div>
<div class="abs" style="left:953px;top:520.0px;width:17px;height:17px;border-radius:50%;border:1px solid #c4c4c4;background:#fff"></div>
<div class="abs" style="left:1017px;top:520.0px;width:17px;height:17px;border-radius:50%;border:1px solid #c4c4c4;background:#fff"></div>
<div class="abs" style="left:1098px;top:520.0px;width:17px;height:17px;border-radius:50%;border:1px solid #c4c4c4;background:#fff"></div>
<div class="abs" style="left:1182px;top:520.0px;width:17px;height:17px;border-radius:50%;border:1px solid #c4c4c4;background:#fff"></div>
<div class="abs" style="left:1603px;top:519px;width:154px;height:25px;border:1px solid #6b6b6b;border-radius:2px;background:#fff"></div>
<div class="abs" style="left:220px;top:549px;width:1680px;height:1px;background:#efefef"></div>
<div class="abs" style="left:868px;top:556.0px;width:17px;height:17px;border-radius:50%;border:1.2px solid #5bc0de;background:#fff"><div style="position:absolute;left:1.8px;top:1.8px;width:11px;height:11px;border-radius:50%;background:#5bc0de"></div></div>
<div class="abs" style="left:953px;top:556.0px;width:17px;height:17px;border-radius:50%;border:1px solid #c4c4c4;background:#fff"></div>
<div class="abs" style="left:1017px;top:556.0px;width:17px;height:17px;border-radius:50%;border:1px solid #c4c4c4;background:#fff"></div>
<div class="abs" style="left:1098px;top:556.0px;width:17px;height:17px;border-radius:50%;border:1px solid #c4c4c4;background:#fff"></div>
<div class="abs" style="left:1182px;top:556.0px;width:17px;height:17px;border-radius:50%;border:1px solid #c4c4c4;background:#fff"></div>
<div class="abs" style="left:1603px;top:555px;width:154px;height:25px;border:1px solid #6b6b6b;border-radius:2px;background:#fff"></div>
<div class="abs" style="left:220px;top:585px;width:1680px;height:1px;background:#efefef"></div>
<div class="abs" style="left:868px;top:592.0px;width:17px;height:17px;border-radius:50%;border:1.2px solid #5bc0de;background:#fff"><div style="position:absolute;left:1.8px;top:1.8px;width:11px;height:11px;border-radius:50%;background:#5bc0de"></div></div>
<div class="abs" style="left:953px;top:592.0px;width:17px;height:17px;border-radius:50%;border:1px solid #c4c4c4;background:#fff"></div>
<div class="abs" style="left:1017px;top:592.0px;width:17px;height:17px;border-radius:50%;border:1px solid #c4c4c4;background:#fff"></div>
<div class="abs" style="left:1098px;top:592.0px;width:17px;height:17px;border-radius:50%;border:1px solid #c4c4c4;background:#fff"></div>
<div class="abs" style="left:1182px;top:592.0px;width:17px;height:17px;border-radius:50%;border:1px solid #c4c4c4;background:#fff"></div>
<div class="abs" style="left:1603px;top:591px;width:154px;height:25px;border:1px solid #6b6b6b;border-radius:2px;background:#fff"></div>
<div class="abs" style="left:220px;top:621px;width:1680px;height:1px;background:#efefef"></div>
<div class="abs" style="left:1859px;top:632px;width:21px;height:18px;background:#eee"></div>
<svg class="abs" style="left:1846px;top:638px" width="5" height="8" viewBox="0 0 5 8"><path d="M4 1 L1 4 L4 7" stroke="#777" stroke-width="1" fill="none"/></svg>
<svg class="abs" style="left:1887px;top:638px" width="5" height="8" viewBox="0 0 5 8"><path d="M1 1 L4 4 L1 7" stroke="#777" stroke-width="1" fill="none"/></svg>
<div class="abs tx" style="left:245.00px;top:12.87px;font-size:20px;line-height:20px;font-weight:bold;color:#a3d83a;letter-spacing:0.278px">Your School Name</div>
<div class="abs tx" style="left:1379.00px;top:18.15px;font-size:14px;line-height:14px;font-weight:normal;color:#999;letter-spacing:-0.380px;width:146px;overflow:hidden">Search By Student Name</div>
<div class="abs tx" style="left:1604.00px;top:16.73px;font-size:14.5px;line-height:14.5px;font-weight:normal;color:#fff;letter-spacing:-1.557px;-webkit-text-stroke:0.45px #fff">USD</div>
<div class="abs tx" style="left:15.00px;top:59.57px;font-size:13.5px;line-height:13.5px;font-weight:bold;color:#f2f2f2;letter-spacing:-0.481px">Current Session: 2023-24</div>
<div class="abs tx" style="left:15.00px;top:83.57px;font-size:13.5px;line-height:13.5px;font-weight:bold;color:#f2f2f2;letter-spacing:-0.752px">Quick Links</div>
<div class="abs tx" style="left:38.30px;top:140.16px;font-size:13.4px;line-height:13.4px;font-weight:bold;color:#f4a32a;letter-spacing:-0.435px">Attendance</div>
<div class="abs tx" style="left:35.00px;top:176.90px;font-size:13px;line-height:13px;font-weight:bold;color:#f2f2f2;letter-spacing:-0.475px">Approve Leave</div>
<div class="abs tx" style="left:35.00px;top:205.50px;font-size:13px;line-height:13px;font-weight:bold;color:#f4a32a;letter-spacing:-0.272px">Period Attendance</div>
<div class="abs tx" style="left:35.00px;top:234.60px;font-size:13px;line-height:13px;font-weight:bold;color:#f2f2f2;letter-spacing:-0.266px">Period Attendance By Date</div>
<div class="abs tx" style="left:38.40px;top:270.66px;font-size:13.4px;line-height:13.4px;font-weight:bold;color:#f0f0f0;letter-spacing:-0.497px">Online Examinations</div>
<div class="abs tx" style="left:38.40px;top:313.66px;font-size:13.4px;line-height:13.4px;font-weight:bold;color:#f0f0f0;letter-spacing:-0.439px">Academics</div>
<div class="abs tx" style="left:38.40px;top:356.66px;font-size:13.4px;line-height:13.4px;font-weight:bold;color:#f0f0f0;letter-spacing:-0.548px">Lesson Plan</div>
<div class="abs tx" style="left:38.40px;top:399.66px;font-size:13.4px;line-height:13.4px;font-weight:bold;color:#f0f0f0;letter-spacing:-0.518px">Human Resource</div>
<div class="abs tx" style="left:38.40px;top:442.66px;font-size:13.4px;line-height:13.4px;font-weight:bold;color:#f0f0f0;letter-spacing:-0.454px">Communicate</div>
<div class="abs tx" style="left:38.40px;top:485.66px;font-size:13.4px;line-height:13.4px;font-weight:bold;color:#f0f0f0;letter-spacing:-0.536px">Download Center</div>
<div class="abs tx" style="left:38.40px;top:528.66px;font-size:13.4px;line-height:13.4px;font-weight:bold;color:#f0f0f0;letter-spacing:-0.494px">Homework</div>
<div class="abs tx" style="left:38.40px;top:571.66px;font-size:13.4px;line-height:13.4px;font-weight:bold;color:#f0f0f0;letter-spacing:-0.649px">Library</div>
<div class="abs tx" style="left:38.40px;top:614.66px;font-size:13.4px;line-height:13.4px;font-weight:bold;color:#f0f0f0;letter-spacing:-0.509px">Inventory</div>
<div class="abs tx" style="left:38.40px;top:657.66px;font-size:13.4px;line-height:13.4px;font-weight:bold;color:#f0f0f0;letter-spacing:-0.432px">Transport</div>
<div class="abs tx" style="left:38.40px;top:700.66px;font-size:13.4px;line-height:13.4px;font-weight:bold;color:#f0f0f0;letter-spacing:-0.305px">Hostel</div>
<div class="abs tx" style="left:38.40px;top:743.66px;font-size:13.4px;line-height:13.4px;font-weight:bold;color:#f0f0f0;letter-spacing:-0.299px">Certificate</div>
<div class="abs tx" style="left:38.40px;top:786.66px;font-size:13.4px;line-height:13.4px;font-weight:bold;color:#f0f0f0;letter-spacing:-0.461px">Front CMS</div>
<div class="abs tx" style="left:38.40px;top:829.66px;font-size:13.4px;line-height:13.4px;font-weight:bold;color:#f0f0f0;letter-spacing:-0.575px">Alumni</div>
<div class="abs tx" style="left:38.40px;top:872.66px;font-size:13.4px;line-height:13.4px;font-weight:bold;color:#f0f0f0;letter-spacing:-0.466px">Reports</div>
<div class="abs tx" style="left:38.40px;top:915.66px;font-size:13.4px;line-height:13.4px;font-weight:bold;color:#f0f0f0;letter-spacing:-0.364px">System Setting</div>
<div class="abs tx" style="left:1787.00px;top:941.03px;font-size:10px;line-height:10px;font-weight:normal;color:#444;letter-spacing:-0.008px">© 2023 Your School Name</div>
<div class="abs tx" style="left:220.00px;top:69.42px;font-size:19px;line-height:19px;font-weight:normal;color:#333;letter-spacing:-0.501px">Select Criteria</div>
<div class="abs tx" style="left:220.00px;top:249.02px;font-size:19px;line-height:19px;font-weight:normal;color:#333;letter-spacing:-0.268px">Student List</div>
<div class="abs tx" style="left:220.00px;top:113.15px;font-size:14px;line-height:14px;font-weight:normal;color:#333;letter-spacing:-0.677px;-webkit-text-stroke:0.45px #333">Class</div>
<div class="abs tx" style="left:643.00px;top:113.15px;font-size:14px;line-height:14px;font-weight:normal;color:#333;letter-spacing:-0.449px;-webkit-text-stroke:0.45px #333">Section</div>
<div class="abs tx" style="left:1065.00px;top:113.15px;font-size:14px;line-height:14px;font-weight:normal;color:#333;letter-spacing:-0.691px;-webkit-text-stroke:0.45px #333">Date</div>
<div class="abs tx" style="left:1347.00px;top:113.15px;font-size:14px;line-height:14px;font-weight:normal;color:#333;letter-spacing:-0.283px;-webkit-text-stroke:0.45px #333">Subject</div>
<div class="abs tx" style="left:237.40px;top:142.80px;font-size:13px;line-height:13px;font-weight:normal;color:#555;letter-spacing:-0.308px">Class 1</div>
<div class="abs tx" style="left:660.00px;top:142.80px;font-size:13px;line-height:13px;font-weight:normal;color:#555;letter-spacing:0.000px">A</div>
<div class="abs tx" style="left:1078.00px;top:142.80px;font-size:13px;line-height:13px;font-weight:normal;color:#555;letter-spacing:0.604px">12/02/2023</div>
<div class="abs tx" style="left:1364.20px;top:142.80px;font-size:13px;line-height:13px;font-weight:normal;color:#555;letter-spacing:0.118px">Hindi (8:00 AM- 08:40 AM) By Suresh Lalwani (32201)</div>
<div class="abs tx" style="left:1850.00px;top:186.80px;font-size:13px;line-height:13px;font-weight:normal;color:#fff;letter-spacing:-0.518px;-webkit-text-stroke:0.55px #fff">Search</div>
<div class="abs tx" style="left:220.00px;top:292.75px;font-size:14px;line-height:14px;font-weight:normal;color:#333;letter-spacing:-0.197px">Set attendance for all students as</div>
<div class="abs tx" style="left:457.40px;top:293.55px;font-size:14px;line-height:14px;font-weight:normal;color:#333;letter-spacing:-0.441px">Present</div>
<div class="abs tx" style="left:542.00px;top:293.55px;font-size:14px;line-height:14px;font-weight:normal;color:#333;letter-spacing:-0.583px">Late</div>
<div class="abs tx" style="left:606.50px;top:293.55px;font-size:14px;line-height:14px;font-weight:normal;color:#333;letter-spacing:-0.317px">Absent</div>
<div class="abs tx" style="left:687.40px;top:293.55px;font-size:14px;line-height:14px;font-weight:normal;color:#333;letter-spacing:-0.348px">Holiday</div>
<div class="abs tx" style="left:771.00px;top:293.55px;font-size:14px;line-height:14px;font-weight:normal;color:#333;letter-spacing:-0.469px">Half Day</div>
<div class="abs tx" style="left:1797.00px;top:300.00px;font-size:13px;line-height:13px;font-weight:normal;color:#fff;letter-spacing:-0.466px;-webkit-text-stroke:0.55px #fff">Save Attendance</div>
<div class="abs tx" style="left:220.00px;top:345.65px;font-size:14px;line-height:14px;font-weight:normal;color:#555;letter-spacing:-0.378px">Search...</div>
<div class="abs tx" style="left:225.00px;top:382.15px;font-size:14px;line-height:14px;font-weight:normal;color:#333;letter-spacing:0.000px;-webkit-text-stroke:0.6px #333">#</div>
<div class="abs tx" style="left:290.00px;top:382.15px;font-size:14px;line-height:14px;font-weight:normal;color:#333;letter-spacing:-0.288px;-webkit-text-stroke:0.6px #333">Admission No</div>
<div class="abs tx" style="left:494.60px;top:382.15px;font-size:14px;line-height:14px;font-weight:normal;color:#333;letter-spacing:-0.340px;-webkit-text-stroke:0.6px #333">Roll Number</div>
<div class="abs tx" style="left:683.00px;top:382.15px;font-size:14px;line-height:14px;font-weight:normal;color:#333;letter-spacing:-0.882px;-webkit-text-stroke:0.6px #333">Name</div>
<div class="abs tx" style="left:868.30px;top:382.15px;font-size:14px;line-height:14px;font-weight:normal;color:#333;letter-spacing:-0.326px;-webkit-text-stroke:0.6px #333">Attendance</div>
<div class="abs tx" style="left:1603.00px;top:382.15px;font-size:14px;line-height:14px;font-weight:normal;color:#333;letter-spacing:-0.524px;-webkit-text-stroke:0.6px #333">Note</div>
<div class="abs tx" style="left:226.00px;top:414.00px;font-size:13px;line-height:13px;font-weight:normal;color:#333;letter-spacing:0.000px">1</div>
<div class="abs tx" style="left:290.50px;top:414.00px;font-size:13px;line-height:13px;font-weight:normal;color:#333;letter-spacing:-0.162px">19002</div>
<div class="abs tx" style="left:495.30px;top:414.00px;font-size:13px;line-height:13px;font-weight:normal;color:#333;letter-spacing:-0.096px">455155</div>
<div class="abs tx" style="left:683.30px;top:414.00px;font-size:13px;line-height:13px;font-weight:normal;color:#333;letter-spacing:0.177px">Emily Thomas</div>
<div class="abs tx" style="left:893.30px;top:413.95px;font-size:14px;line-height:14px;font-weight:normal;color:#333;letter-spacing:-0.391px">Present</div>
<div class="abs tx" style="left:978.30px;top:413.95px;font-size:14px;line-height:14px;font-weight:normal;color:#333;letter-spacing:-0.716px">Late</div>
<div class="abs tx" style="left:1042.60px;top:413.95px;font-size:14px;line-height:14px;font-weight:normal;color:#333;letter-spacing:-0.457px">Absent</div>
<div class="abs tx" style="left:1123.30px;top:413.95px;font-size:14px;line-height:14px;font-weight:normal;color:#333;letter-spacing:-0.398px">Holiday</div>
<div class="abs tx" style="left:1207.00px;top:413.95px;font-size:14px;line-height:14px;font-weight:normal;color:#333;letter-spacing:-0.483px">Half Day</div>
<div class="abs tx" style="left:226.00px;top:450.00px;font-size:13px;line-height:13px;font-weight:normal;color:#333;letter-spacing:0.000px">2</div>
<div class="abs tx" style="left:290.50px;top:450.00px;font-size:13px;line-height:13px;font-weight:normal;color:#333;letter-spacing:-0.162px">18001</div>
<div class="abs tx" style="left:495.30px;top:450.00px;font-size:13px;line-height:13px;font-weight:normal;color:#333;letter-spacing:-0.052px">2034545</div>
<div class="abs tx" style="left:683.30px;top:450.00px;font-size:13px;line-height:13px;font-weight:normal;color:#333;letter-spacing:0.247px">Amit Sharma</div>
<div class="abs tx" style="left:893.30px;top:449.95px;font-size:14px;line-height:14px;font-weight:normal;color:#333;letter-spacing:-0.391px">Present</div>
<div class="abs tx" style="left:978.30px;top:449.95px;font-size:14px;line-height:14px;font-weight:normal;color:#333;letter-spacing:-0.716px">Late</div>
<div class="abs tx" style="left:1042.60px;top:449.95px;font-size:14px;line-height:14px;font-weight:normal;color:#333;letter-spacing:-0.457px">Absent</div>
<div class="abs tx" style="left:1123.30px;top:449.95px;font-size:14px;line-height:14px;font-weight:normal;color:#333;letter-spacing:-0.398px">Holiday</div>
<div class="abs tx" style="left:1207.00px;top:449.95px;font-size:14px;line-height:14px;font-weight:normal;color:#333;letter-spacing:-0.483px">Half Day</div>
<div class="abs tx" style="left:226.00px;top:486.00px;font-size:13px;line-height:13px;font-weight:normal;color:#333;letter-spacing:0.000px">3</div>
<div class="abs tx" style="left:290.50px;top:486.00px;font-size:13px;line-height:13px;font-weight:normal;color:#333;letter-spacing:-0.096px">451845</div>
<div class="abs tx" style="left:495.30px;top:486.00px;font-size:13px;line-height:13px;font-weight:normal;color:#333;letter-spacing:-0.096px">545154</div>
<div class="abs tx" style="left:683.30px;top:486.00px;font-size:13px;line-height:13px;font-weight:normal;color:#333;letter-spacing:0.151px">monika Roy</div>
<div class="abs tx" style="left:893.30px;top:485.95px;font-size:14px;line-height:14px;font-weight:normal;color:#333;letter-spacing:-0.391px">Present</div>
<div class="abs tx" style="left:978.30px;top:485.95px;font-size:14px;line-height:14px;font-weight:normal;color:#333;letter-spacing:-0.716px">Late</div>
<div class="abs tx" style="left:1042.60px;top:485.95px;font-size:14px;line-height:14px;font-weight:normal;color:#333;letter-spacing:-0.457px">Absent</div>
<div class="abs tx" style="left:1123.30px;top:485.95px;font-size:14px;line-height:14px;font-weight:normal;color:#333;letter-spacing:-0.398px">Holiday</div>
<div class="abs tx" style="left:1207.00px;top:485.95px;font-size:14px;line-height:14px;font-weight:normal;color:#333;letter-spacing:-0.483px">Half Day</div>
<div class="abs tx" style="left:226.00px;top:522.00px;font-size:13px;line-height:13px;font-weight:normal;color:#333;letter-spacing:0.000px">4</div>
<div class="abs tx" style="left:290.50px;top:522.00px;font-size:13px;line-height:13px;font-weight:normal;color:#333;letter-spacing:-0.096px">465461</div>
<div class="abs tx" style="left:495.30px;top:522.00px;font-size:13px;line-height:13px;font-weight:normal;color:#333;letter-spacing:-0.052px">1518445</div>
<div class="abs tx" style="left:683.30px;top:522.00px;font-size:13px;line-height:13px;font-weight:normal;color:#333;letter-spacing:0.293px">Jyoti Soni</div>
<div class="abs tx" style="left:893.30px;top:521.95px;font-size:14px;line-height:14px;font-weight:normal;color:#333;letter-spacing:-0.391px">Present</div>
<div class="abs tx" style="left:978.30px;top:521.95px;font-size:14px;line-height:14px;font-weight:normal;color:#333;letter-spacing:-0.716px">Late</div>
<div class="abs tx" style="left:1042.60px;top:521.95px;font-size:14px;line-height:14px;font-weight:normal;color:#333;letter-spacing:-0.457px">Absent</div>
<div class="abs tx" style="left:1123.30px;top:521.95px;font-size:14px;line-height:14px;font-weight:normal;color:#333;letter-spacing:-0.398px">Holiday</div>
<div class="abs tx" style="left:1207.00px;top:521.95px;font-size:14px;line-height:14px;font-weight:normal;color:#333;letter-spacing:-0.483px">Half Day</div>
<div class="abs tx" style="left:226.00px;top:558.00px;font-size:13px;line-height:13px;font-weight:normal;color:#333;letter-spacing:0.000px">5</div>
<div class="abs tx" style="left:290.50px;top:558.00px;font-size:13px;line-height:13px;font-weight:normal;color:#333;letter-spacing:-0.052px">5566221</div>
<div class="abs tx" style="left:495.30px;top:558.00px;font-size:13px;line-height:13px;font-weight:normal;color:#333;letter-spacing:0.270px">4545111</div>
<div class="abs tx" style="left:683.30px;top:558.00px;font-size:13px;line-height:13px;font-weight:normal;color:#333;letter-spacing:0.129px">Shweta Gupta</div>
<div class="abs tx" style="left:893.30px;top:557.95px;font-size:14px;line-height:14px;font-weight:normal;color:#333;letter-spacing:-0.391px">Present</div>
<div class="abs tx" style="left:978.30px;top:557.95px;font-size:14px;line-height:14px;font-weight:normal;color:#333;letter-spacing:-0.716px">Late</div>
<div class="abs tx" style="left:1042.60px;top:557.95px;font-size:14px;line-height:14px;font-weight:normal;color:#333;letter-spacing:-0.457px">Absent</div>
<div class="abs tx" style="left:1123.30px;top:557.95px;font-size:14px;line-height:14px;font-weight:normal;color:#333;letter-spacing:-0.398px">Holiday</div>
<div class="abs tx" style="left:1207.00px;top:557.95px;font-size:14px;line-height:14px;font-weight:normal;color:#333;letter-spacing:-0.483px">Half Day</div>
<div class="abs tx" style="left:226.00px;top:594.00px;font-size:13px;line-height:13px;font-weight:normal;color:#333;letter-spacing:0.000px">6</div>
<div class="abs tx" style="left:290.50px;top:594.00px;font-size:13px;line-height:13px;font-weight:normal;color:#333;letter-spacing:-0.096px">515454</div>
<div class="abs tx" style="left:495.30px;top:594.00px;font-size:13px;line-height:13px;font-weight:normal;color:#333;letter-spacing:-0.096px">545151</div>
<div class="abs tx" style="left:683.30px;top:594.00px;font-size:13px;line-height:13px;font-weight:normal;color:#333;letter-spacing:0.135px">Anubhav Singh</div>
<div class="abs tx" style="left:893.30px;top:593.95px;font-size:14px;line-height:14px;font-weight:normal;color:#333;letter-spacing:-0.391px">Present</div>
<div class="abs tx" style="left:978.30px;top:593.95px;font-size:14px;line-height:14px;font-weight:normal;color:#333;letter-spacing:-0.716px">Late</div>
<div class="abs tx" style="left:1042.60px;top:593.95px;font-size:14px;line-height:14px;font-weight:normal;color:#333;letter-spacing:-0.457px">Absent</div>
<div class="abs tx" style="left:1123.30px;top:593.95px;font-size:14px;line-height:14px;font-weight:normal;color:#333;letter-spacing:-0.398px">Holiday</div>
<div class="abs tx" style="left:1207.00px;top:593.95px;font-size:14px;line-height:14px;font-weight:normal;color:#333;letter-spacing:-0.483px">Half Day</div>
<div class="abs tx" style="left:220.30px;top:638.76px;font-size:9.5px;line-height:9.5px;font-weight:normal;color:#333;letter-spacing:0.215px">Records: 1 to 6 of 6</div>
<div class="abs tx" style="left:1867.00px;top:637.38px;font-size:9px;line-height:9px;font-weight:normal;color:#777;letter-spacing:0.000px">1</div>
</body></html>
